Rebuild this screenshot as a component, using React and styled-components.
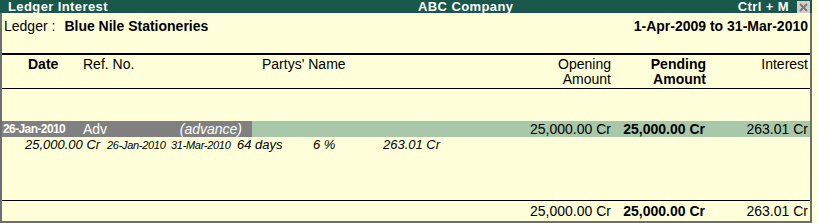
import styled, { createGlobalStyle } from 'styled-components';

const GlobalStyle = createGlobalStyle`
  * { box-sizing: border-box; }
  html, body { margin: 0; padding: 0; background: #ffffd9; }
  body { font-family: "Liberation Sans", Arial, sans-serif; font-size: 14px; color: #000; }
`;

const Window = styled.div`
  width: 812px;
  height: 223px;
  background: #ffffd9;
  border-left: 2px solid #6e6e6e;
  border-right: 2px solid #6e6e6e;
  border-bottom: 2px solid #6e6e6e;
  display: flex;
  flex-direction: column;
`;

const TitleBar = styled.div`
  height: 13px;
  margin-left: -2px;
  margin-right: -2px;
  background: #19574a;
  color: #fff;
  font-weight: 700;
  font-size: 13px;
  line-height: 14px;
  letter-spacing: 0.4px;
  display: flex;
  align-items: flex-start;
`;

const TitleLeft = styled.span`
  width: 418px;
  padding-left: 8px;
`;

const TitleCenter = styled.span`
  flex: 1;
`;

const TitleRight = styled.span`
  padding-right: 8px;
`;

const CloseBox = styled.span`
  width: 13px;
  height: 12px;
  margin-top: 1px;
  margin-right: 2px;
  background: #d4d0c8;
  display: flex;
  align-items: center;
  justify-content: center;
`;

const LedgerRow = styled.div`
  height: 40px;
  display: flex;
  justify-content: space-between;
  padding: 5px 2px 0 2px;
  line-height: 16px;
`;

const Label = styled.span`
  font-weight: ${({ $bold }) => ($bold ? 700 : 400)};
  margin-left: ${({ $gap }) => $gap || 0}px;
`;

const HeadRow = styled.div`
  border-top: 2px solid #000;
  border-bottom: 1px solid #000;
  height: 36px;
  padding-top: 2px;
  display: grid;
  grid-template-columns: 78px 172px 256px 104px 96px 102px;
  line-height: 15px;
`;

const Cell = styled.div`
  text-align: ${({ $right }) => ($right ? 'right' : 'left')};
  font-weight: ${({ $bold }) => ($bold ? 700 : 400)};
  padding-left: ${({ $pl }) => $pl || 0}px;
  padding-right: ${({ $pr }) => $pr || 0}px;
  white-space: nowrap;
`;

const Spacer = styled.div`
  height: ${({ $h }) => $h}px;
`;

const EntryRow = styled.div`
  height: 16px;
  line-height: 16px;
  display: grid;
  grid-template-columns: 78px 172px 256px 104px 96px 102px;
  background: #a9c8a9;
`;

const DateCell = styled.div`
  background: #808080;
  color: #fff;
  font-weight: 700;
  font-size: 12px;
  letter-spacing: -0.6px;
  padding-left: 1px;
`;

const RefCell = styled.div`
  background: #808080;
  color: #fff;
  display: flex;
  justify-content: space-between;
  padding-left: 3px;
  padding-right: 10px;
`;

const Italic = styled.span`
  font-style: italic;
`;

const DetailRow = styled.div`
  height: 16px;
  line-height: 16px;
  display: grid;
  grid-template-columns: 82px 64px 66px 76px 70px auto;
  padding-left: 23px;
  font-style: italic;
  font-size: 13px;
`;

const DetailCell = styled.span`
  font-size: ${({ $small }) => ($small ? 11 : 13)}px;
  letter-spacing: ${({ $small }) => ($small ? '-0.3px' : '0')};
  white-space: nowrap;
`;

const Fill = styled.div`
  flex: 1;
`;

const TotalRow = styled.div`
  border-top: 1px solid #000;
  height: 21px;
  padding-top: 2px;
  line-height: 16px;
  display: grid;
  grid-template-columns: 78px 172px 256px 104px 96px 102px;
`;

export default function App() {
  return (
    <>
      <GlobalStyle />
      <Window>
        <TitleBar>
          <TitleLeft>Ledger Interest</TitleLeft>
          <TitleCenter>ABC Company</TitleCenter>
          <TitleRight>Ctrl + M</TitleRight>
          <CloseBox>
            <svg width="9" height="9" viewBox="0 0 9 9">
              <path d="M1 1 L8 8 M8 1 L1 8" stroke="#7a7a7a" strokeWidth="2" />
            </svg>
          </CloseBox>
        </TitleBar>

        <LedgerRow>
          <div>
            <Label>Ledger :</Label>
            <Label $bold $gap={9}>Blue Nile Stationeries</Label>
          </div>
          <Label $bold>1-Apr-2009 to 31-Mar-2010</Label>
        </LedgerRow>

        <HeadRow>
          <Cell $bold $pl={26}>Date</Cell>
          <Cell $pl={3}>Ref. No.</Cell>
          <Cell $pl={10}>Partys' Name</Cell>
          <Cell $right $pr={1}>Opening<br />Amount</Cell>
          <Cell $right $bold $pr={2}>Pending<br />Amount</Cell>
          <Cell $right $pr={2}>Interest</Cell>
        </HeadRow>

        <Spacer $h={32} />

        <EntryRow>
          <DateCell>26-Jan-2010</DateCell>
          <RefCell>
            <span>Adv</span>
            <Italic>(advance)</Italic>
          </RefCell>
          <Cell />
          <Cell $right $pr={1}>25,000.00 Cr</Cell>
          <Cell $right $bold $pr={3}>25,000.00 Cr</Cell>
          <Cell $right $pr={2}>263.01 Cr</Cell>
        </EntryRow>

        <DetailRow>
          <DetailCell>25,000.00 Cr</DetailCell>
          <DetailCell $small>26-Jan-2010</DetailCell>
          <DetailCell $small>31-Mar-2010</DetailCell>
          <DetailCell>64 days</DetailCell>
          <DetailCell>6 %</DetailCell>
          <DetailCell>263.01 Cr</DetailCell>
        </DetailRow>

        <Fill />

        <TotalRow>
          <Cell />
          <Cell />
          <Cell />
          <Cell $right $pr={1}>25,000.00 Cr</Cell>
          <Cell $right $bold $pr={3}>25,000.00 Cr</Cell>
          <Cell $right $pr={2}>263.01 Cr</Cell>
        </TotalRow>
      </Window>
    </>
  );
}
